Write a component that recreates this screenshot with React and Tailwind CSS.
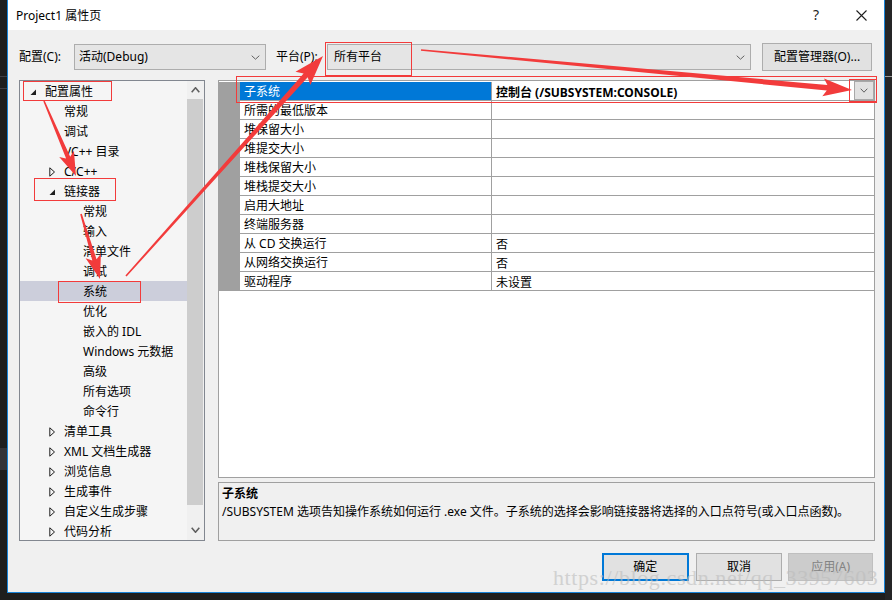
import React from 'react';

const Chevron = ({ w = 9, h = 5, color = '#606060', sw = 1, up = false }) => (
  <svg width={w} height={h} viewBox={`0 0 ${w} ${h}`}>
    <path
      d={up ? `M0.7 ${h - 0.7} L${w / 2} 0.8 L${w - 0.7} ${h - 0.7}` : `M0.7 0.7 L${w / 2} ${h - 0.8} L${w - 0.7} 0.7`}
      fill="none"
      stroke={color}
      strokeWidth={sw}
    />
  </svg>
);

const TriOpen = () => (
  <svg width="7" height="7" viewBox="0 0 7 7">
    <polygon points="6,0.5 6,6 0.5,6" fill="#1e1e1e" />
  </svg>
);

const TriClosed = () => (
  <svg width="7" height="10" viewBox="0 0 7 10">
    <polygon points="0.8,0.8 5.5,5 0.8,9.2" fill="none" stroke="#1e1e1e" strokeWidth="1" />
  </svg>
);

const PAD = { 0: 'pl-[10px]', 1: 'pl-[29px]', 2: 'pl-[48px]' };

const tree = [
  { t: '配置属性', l: 0, e: 'open' },
  { t: '常规', l: 1 },
  { t: '调试', l: 1 },
  { t: 'VC++ 目录', l: 1 },
  { t: 'C/C++', l: 1, e: 'closed' },
  { t: '链接器', l: 1, e: 'open' },
  { t: '常规', l: 2 },
  { t: '输入', l: 2 },
  { t: '清单文件', l: 2 },
  { t: '调试', l: 2 },
  { t: '系统', l: 2, sel: true },
  { t: '优化', l: 2 },
  { t: '嵌入的 IDL', l: 2 },
  { t: 'Windows 元数据', l: 2 },
  { t: '高级', l: 2 },
  { t: '所有选项', l: 2 },
  { t: '命令行', l: 2 },
  { t: '清单工具', l: 1, e: 'closed' },
  { t: 'XML 文档生成器', l: 1, e: 'closed' },
  { t: '浏览信息', l: 1, e: 'closed' },
  { t: '生成事件', l: 1, e: 'closed' },
  { t: '自定义生成步骤', l: 1, e: 'closed' },
  { t: '代码分析', l: 1, e: 'closed' },
];

const props = [
  ['子系统', '控制台 (/SUBSYSTEM:CONSOLE)'],
  ['所需的最低版本', ''],
  ['堆保留大小', ''],
  ['堆提交大小', ''],
  ['堆栈保留大小', ''],
  ['堆栈提交大小', ''],
  ['启用大地址', ''],
  ['终端服务器', ''],
  ['从 CD 交换运行', '否'],
  ['从网络交换运行', '否'],
  ['驱动程序', '未设置'],
];

function arrowPoints(tx, ty, px, py, h = 26, hw = 9, tw = 0.8, sw = 2.6) {
  const dx = px - tx, dy = py - ty;
  const L = Math.hypot(dx, dy);
  const ux = dx / L, uy = dy / L;
  const nx = -uy, ny = ux;
  const bx = px - ux * h, by = py - uy * h;
  const jx = bx + ux * 4, jy = by + uy * 4;
  const pts = [
    [tx + nx * tw, ty + ny * tw],
    [jx + nx * sw, jy + ny * sw],
    [bx + nx * hw, by + ny * hw],
    [px, py],
    [bx - nx * hw, by - ny * hw],
    [jx - nx * sw, jy - ny * sw],
    [tx - nx * tw, ty - ny * tw],
  ];
  return pts.map((p) => p.map((v) => v.toFixed(1)).join(',')).join(' ');
}

function Tree() {
  return (
    <div className="w-[186px] h-[461px] border border-[#828790] bg-[#f5f5f5] flex overflow-hidden shrink-0">
      <div className="flex-1 overflow-hidden">
        {tree.map((r, i) => (
          <div
            key={i}
            className={`flex items-center h-[20px] ${PAD[r.l]} ${r.sel ? 'bg-[#cccedb]' : ''}`}
          >
            <span className="w-[15px] flex items-center translate-y-[1px]">
              {r.e === 'open' ? <TriOpen /> : r.e === 'closed' ? <TriClosed /> : null}
            </span>
            <span className="whitespace-nowrap leading-[20px] translate-y-[1px]">{r.t}</span>
          </div>
        ))}
      </div>
      <div className="w-[17px] bg-[#f0f0f0] flex flex-col">
        <div className="h-[18px] flex items-center justify-center">
          <Chevron w={9} h={6} sw={1.6} up />
        </div>
        <div className="h-[406px] bg-[#cdcdcd] mr-[1px]" />
        <div className="flex-1" />
        <div className="h-[20px] flex items-center justify-center">
          <Chevron w={9} h={6} sw={1.6} />
        </div>
      </div>
    </div>
  );
}

function Grid() {
  return (
    <div className="w-[657px] flex flex-col gap-[4px] shrink-0">
      <div className="h-[398px] border border-[#a0a0a0] bg-white pt-[1px]">
        {props.map(([n, v], i) => (
          <div key={i} className="flex h-[19px] border-b border-[#a0a0a0]">
            <div className="w-[21px] bg-[#a0a0a0]" />
            <div
              className={`w-[252px] border-r border-[#a0a0a0] pl-[4px] leading-[19px] whitespace-nowrap ${
                i === 0 ? 'bg-[#0078d7] text-white' : ''
              }`}
            >
              {n}
            </div>
            <div className="flex-1 flex items-center pl-[4px] leading-[19px] whitespace-nowrap">
              <span className={i === 0 ? 'font-bold flex-1 translate-y-[0.5px]' : 'flex-1 translate-y-[0.5px]'}>{v}</span>
              {i === 0 && (
                <div className="w-[20px] h-[19px] mt-[-1px] bg-[#e1e1e1] border border-[#a8a8a8] flex items-center justify-center">
                  <Chevron w={8} h={5} />
                </div>
              )}
            </div>
          </div>
        ))}
      </div>
      <div className="h-[59px] border border-[#a0a0a0] bg-[#f0f0f0] pl-[3px] pt-[2px]">
        <div className="font-bold leading-[18px]">子系统</div>
        <div className="leading-[18px] whitespace-nowrap">
          /SUBSYSTEM 选项告知操作系统如何运行 .exe 文件。子系统的选择会影响链接器将选择的入口点符号(或入口点函数)。
        </div>
      </div>
    </div>
  );
}

function Overlay() {
  const red = '#f23b3b';
  const boxes = [
    [23.5, 81.5, 88, 19],
    [34.5, 178.5, 81, 22],
    [58.5, 281.5, 82, 21],
    [325.5, 42.5, 86, 33],
    [236.5, 76.5, 640, 26],
    [849.5, 79.5, 27, 22],
  ];
  return (
    <svg className="absolute left-0 top-0 pointer-events-none" width="892" height="600" viewBox="0 0 892 600">
      {boxes.map(([x, y, w, h], i) => (
        <rect key={i} x={x} y={y} width={w} height={h} fill="none" stroke={red} strokeWidth="1" />
      ))}
      <polygon points={arrowPoints(44, 101, 76, 176, 24, 8, 0.8, 2.2)} fill={red} />
      <polygon points={arrowPoints(81, 214, 100, 279, 24, 8, 0.8, 2.2)} fill={red} />
      <polygon points={arrowPoints(126, 276, 323, 56, 30, 10, 0.8, 2.8)} fill={red} />
      <polygon points={arrowPoints(421, 50, 852, 90, 29, 9, 0.8, 2.8)} fill={red} />
    </svg>
  );
}

export default function App() {
  return (
    <div className="relative w-[892px] h-[600px] bg-[#1e1e1e] overflow-hidden flex font-['Noto_Sans','Noto_Sans_CJK_SC',sans-serif] text-[12px] text-black">
      <div className="w-[7px] h-[600px] bg-[#1e1e1e] flex flex-col shrink-0">
        <div className="h-[76px]" />
        <div className="h-[1px] bg-[#3f3f46]" />
        <div className="h-[11px]" />
        <div className="h-[1px] bg-[#3f3f46]" />
        <div className="h-[359px]" />
        <div className="h-[22px] bg-[#333337]" />
      </div>
      <div className="w-[878px] h-[593px] border-x border-b border-[#1883d7] bg-[#f0f0f0] flex flex-col shrink-0">
        <div className="h-[30px] bg-white flex items-center pl-[8px]">
          <span className="leading-[16px] translate-y-[1px]">Project1 属性页</span>
          <div className="ml-auto flex items-center mr-[17px]">
            <span className="text-[14px] leading-[16px] text-[#1e1e1e]">?</span>
            <svg className="ml-[37px]" width="11" height="11" viewBox="0 0 11 11">
              <path d="M0.5 0.5 L10.5 10.5 M10.5 0.5 L0.5 10.5" stroke="#1e1e1e" strokeWidth="1.1" />
            </svg>
          </div>
        </div>
        <div className="flex flex-col px-[11px] pt-[13px]">
          <div className="flex items-center h-[28px]">
            <span className="w-[55px] whitespace-nowrap">配置(C):</span>
            <div className="w-[192px] h-[26px] bg-[#e5e5e5] border border-[#adadad] flex items-center justify-between pl-[4px] pr-[5px]">
              <span>活动(Debug)</span>
              <Chevron />
            </div>
            <span className="ml-[10px] w-[51px] whitespace-nowrap">平台(P):</span>
            <div className="w-[424px] h-[26px] bg-[#e5e5e5] border border-[#adadad] flex items-center justify-between pl-[6px] pr-[5px]">
              <span>所有平台</span>
              <Chevron />
            </div>
            <div className="ml-[11px] w-[110px] h-[28px] bg-[#e1e1e1] border border-[#adadad] flex items-center justify-center whitespace-nowrap">
              配置管理器(O)...
            </div>
          </div>
          <div className="flex mt-[9px] gap-[13px]">
            <Tree />
            <Grid />
          </div>
          <div className="flex mt-[12px] ml-[583px]">
            <div className="w-[88px] h-[28px] bg-[#e1e1e1] border-2 border-[#0078d7] flex items-center justify-center">
              确定
            </div>
            <div className="ml-[7px] w-[88px] h-[28px] bg-[#e1e1e1] border border-[#adadad] flex items-center justify-center">
              取消
            </div>
            <div className="ml-[6px] w-[86px] h-[28px] bg-[#cccccc] border border-[#bfbfbf] text-[#838383] flex items-center justify-center">
              应用(A)
            </div>
          </div>
        </div>
      </div>
      <div className="w-[7px] h-[600px] bg-[#252526] flex flex-col shrink-0">
        <div className="h-[76px]" />
        <div className="h-[1px] bg-[#9a9a9a]" />
      </div>
      <Overlay />
      <div className="absolute left-[553px] top-[565px] font-['Liberation_Serif',serif] text-[22px] leading-[26px] tracking-[0.6px] text-[#bdbdbd] opacity-60 whitespace-nowrap pointer-events-none">
        https://blog.csdn.net/qq_33957603
      </div>
    </div>
  );
}
